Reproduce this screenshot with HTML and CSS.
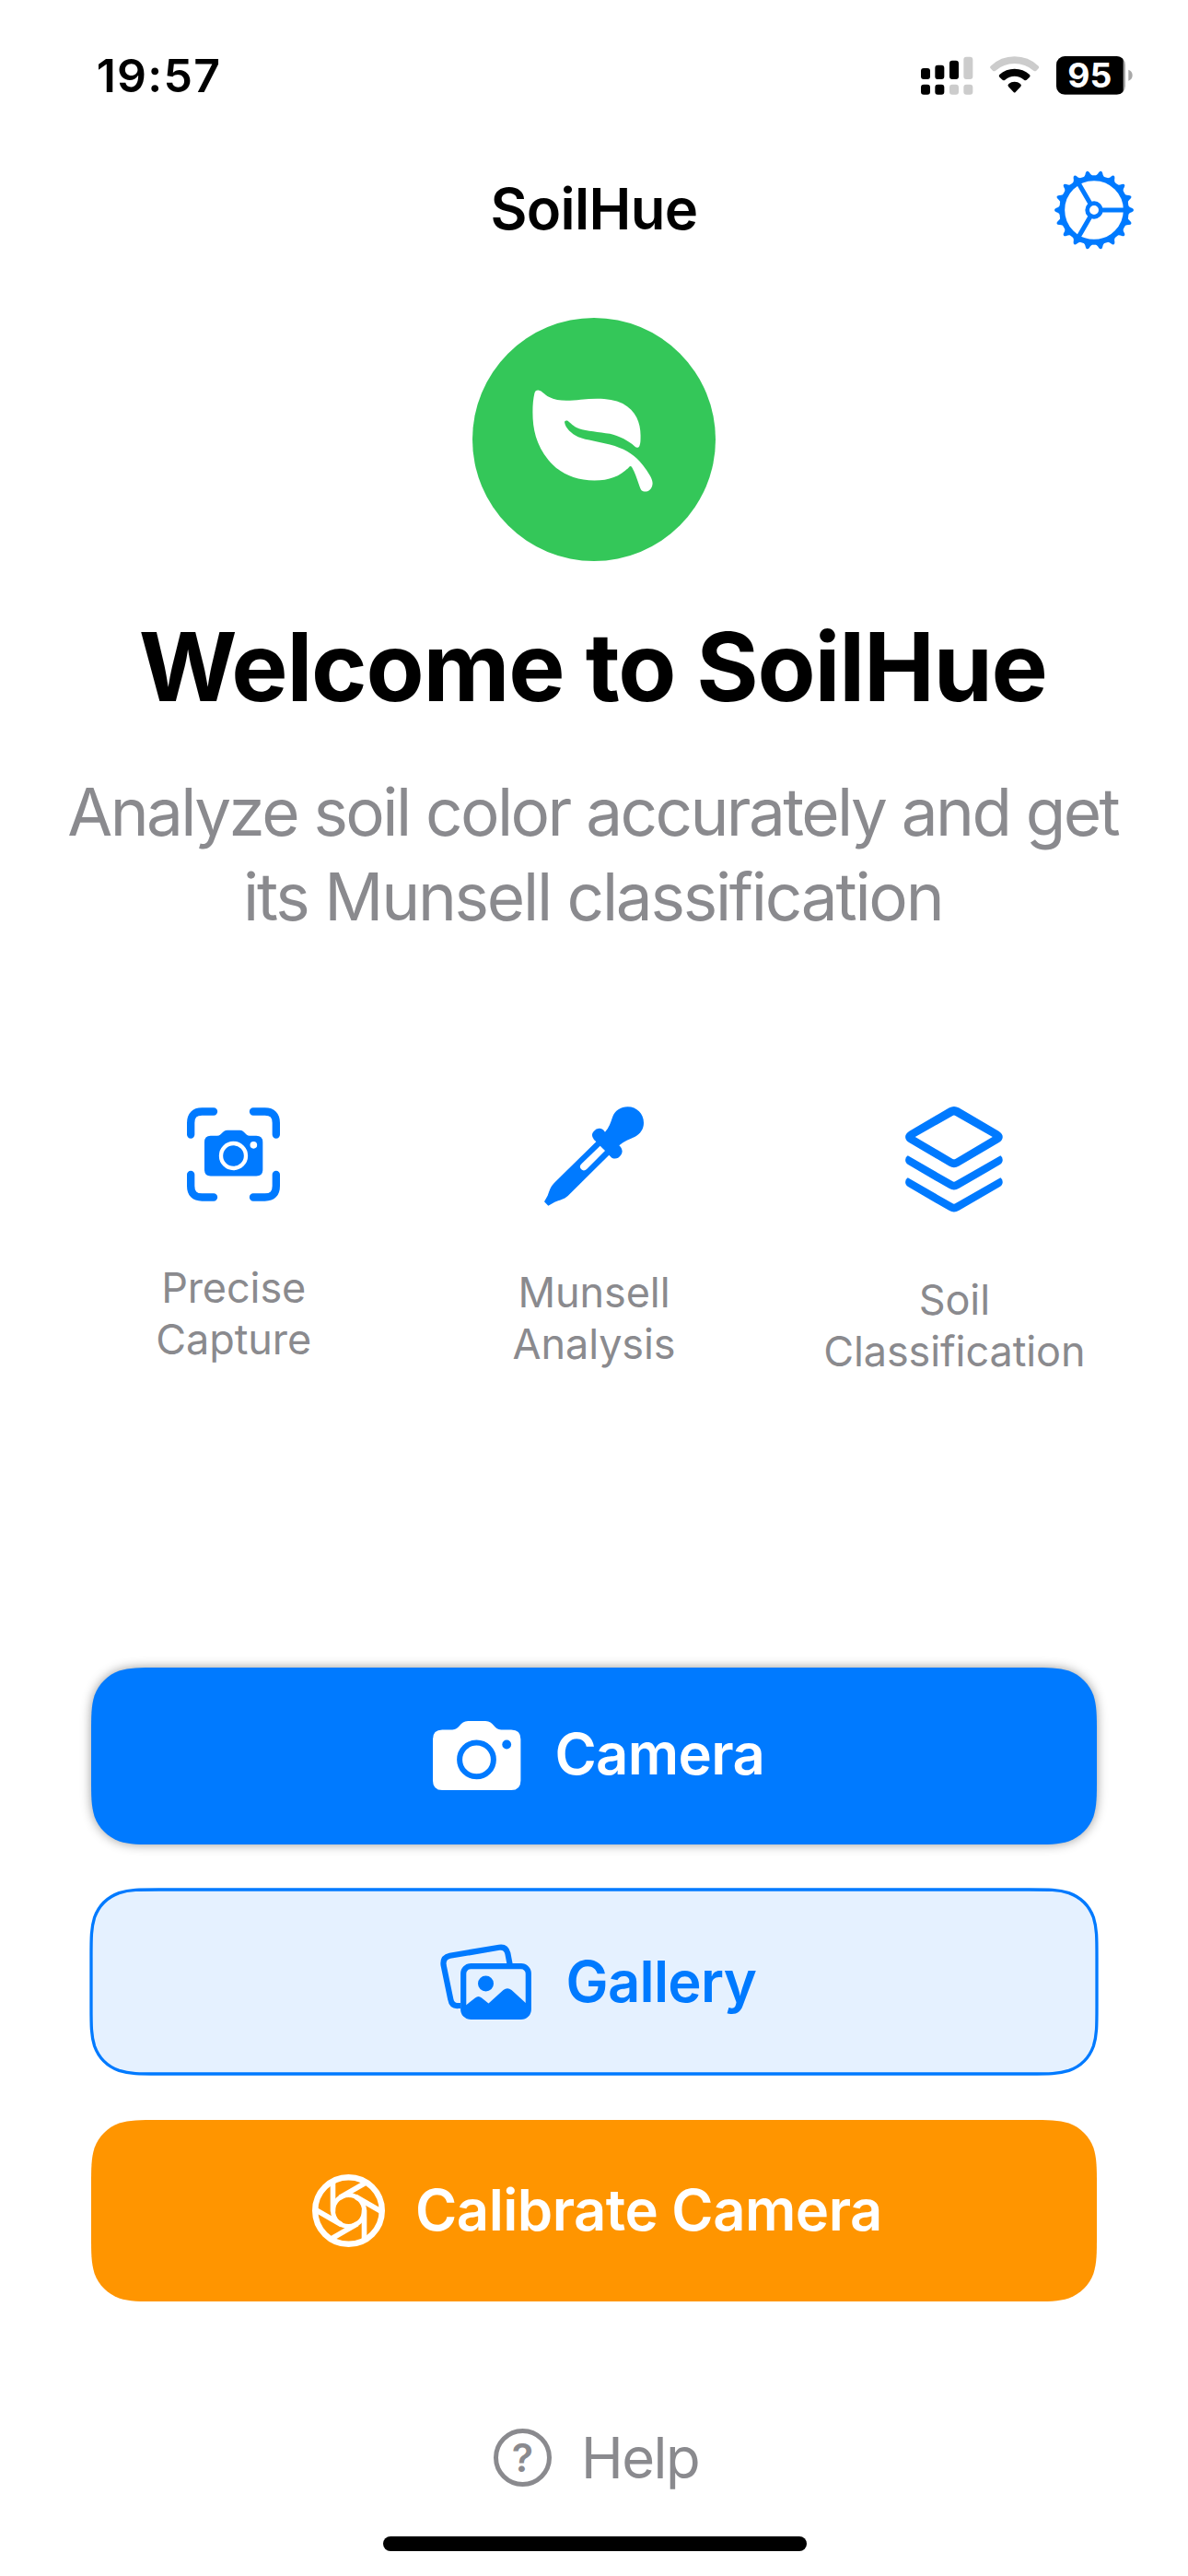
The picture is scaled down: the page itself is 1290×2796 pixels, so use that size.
FILE: index.html
```html
<!DOCTYPE html>
<html lang="en">
<head>
<meta charset="utf-8">
<title>SoilHue</title>
<link rel="stylesheet" href="styles.css">
</head>
<body>
<div class="status">
  <span class="time">19:57</span>
  <div class="indicators">
    <svg width="56.33" height="42" viewBox="120 93 169 126">
      <g fill="#000">
        <rect x="120" y="132" width="30" height="36" rx="9"/>
        <rect x="166" y="122" width="30" height="46" rx="9"/>
        <rect x="213" y="107" width="30" height="61" rx="9"/>
        <rect x="120" y="185" width="30" height="33" rx="9"/>
        <rect x="166" y="185" width="30" height="33" rx="9"/>
      </g>
      <g fill="#ccc">
        <rect x="259" y="95" width="30" height="73" rx="9"/>
        <rect x="213" y="185" width="30" height="33" rx="9"/>
        <rect x="259" y="185" width="30" height="33" rx="9"/>
      </g>
    </svg>
    <svg width="53.33" height="42" viewBox="344 93 160 126">
      <path fill="#ccc" d="M346 125Q379 94 424 94Q469 94 502 125Q506 129 502 133L495 140Q491 144 486 140Q459 117 424 117Q389 117 362 140Q357 144 353 140L346 133Q342 129 346 125Z"/>
      <path d="M375 153Q396 134 424 134Q452 134 473 153Q477 157 473 161L465 169Q460 174 455 170Q441 158 424 158Q407 158 393 170Q388 174 383 169L375 161Q371 157 375 153Z"/>
      <path d="M405 183Q413 176 424 176Q435 176 443 183Q448 187 444 192L427 210Q424 213 421 210L404 192Q400 187 405 183Z"/>
    </svg>
    <svg width="82.67" height="42" viewBox="560 93 248 126">
      <clipPath id="battery"><rect x="560" y="93" width="225" height="125" rx="28"/></clipPath>
      <g clip-path="url(#battery)">
        <rect x="560" y="93" width="225" height="125" fill="#a8a8a8"/>
        <rect x="530" y="93" width="248" height="125" rx="14"/>
      </g>
      <path fill="#a8a8a8" d="M795 137Q808 142 808 155Q808 168 795 173Z"/>
      <text class="charge" x="669" y="196" text-anchor="middle">95</text>
    </svg>
  </div>
</div>

<header class="nav">
  <h1 class="nav-title">SoilHue</h1>
  <svg class="gear" width="90" height="90" viewBox="-135 -135 270 270" fill="none" stroke="#007aff">
    <circle r="104.5" stroke-width="18"/>
    <circle r="22" stroke-width="14"/>
    <path stroke-width="15" d="M26 0H100M-13 -22.5L-50 -86.6M-13 22.5L-50 86.6"/>
    <g id="teeth6">
      <g id="teeth3">
        <path id="tooth" fill="#007aff" stroke="none" d="M108 -18C113 -12 117 -8 123 -6.500Q129 -4 129 0Q129 4 123 6.500C117 8 113 12 108 18Z"/>
        <use href="#tooth" transform="rotate(20)"/>
        <use href="#tooth" transform="rotate(40)"/>
      </g>
      <use href="#teeth3" transform="rotate(60)"/>
    </g>
    <use href="#teeth6" transform="rotate(120)"/>
    <use href="#teeth6" transform="rotate(240)"/>
  </svg>
</header>

<main>
  <div class="logo">
    <svg width="264" height="264" viewBox="68 43 791 791" fill="#fff">
      <path d="M270 288Q272 278 282 278C296 280 300 292 318 301C345 316 385 313 420 309C470 304 520 303 557 322C600 345 615 385 615 425C615 440 615 450 612 458C610 466 602 467 596 461C575 442 545 427 515 420C480 413 440 412 415 403C395 396 388 385 378 378C372 375 367 378 368 384C371 402 390 420 412 430C440 441 480 445 515 455C560 467 590 485 612 510C635 537 655 565 654 582C653 600 640 609 627 608C617 607 614 598 609 583C602 562 594 540 586 528Q582 523 577 529C550 557 515 572 465 572C400 571 350 548 315 505C275 455 264 405 264 350C264 325 266 305 270 288Z"/>
    </svg>
  </div>
  <h2 class="welcome">Welcome to SoilHue</h2>
  <p class="lead"><span class="lead-a">Analyze soil color accurately and get</span><br><span class="lead-b">its Munsell classification</span></p>

  <section class="features">
    <div class="feature capture">
      <svg width="101.33" height="102" viewBox="219 93.500 304 306">
        <path fill="none" stroke="#007aff" stroke-width="25" stroke-linecap="round" d="M306 107H268Q231.500 107 231.500 144V182M435 107H473Q509.500 107 509.500 144V182M306 386H268Q231.500 386 231.500 349V312M435 386H473Q509.500 386 509.500 349V312"/>
        <path fill="#007aff" d="M296 186H318C333 186 333 168 351 168H391C408 168 408 186 423 186H445Q466 186 466 207V296Q466 317 445 317H296Q276 317 276 296V207Q276 186 296 186Z"/>
        <circle cx="370.500" cy="251" r="40.500" fill="none" stroke="#fff" stroke-width="13"/>
        <circle cx="436" cy="216" r="11.500" fill="#fff"/>
      </svg>
      <p>Precise<br>Capture</p>
    </div>
    <div class="feature dropper">
      <svg width="108" height="107.670" viewBox="213 89 324 323">
        <path fill="#007aff" d="M411 172C424 158 430 140 435 124C443 102 462 90 485 90C514 90 537 113 537 142C537 162 526 178 509 187C492 195 472 202 457 216L462 221Q472 235 462 248Q450 264 433 256L424 247L290 380C277 392 262 394 247 400L226 412L213 399L224 379C229 365 233 350 246 337L382 204L375 197Q363 182 374 170Q388 154 405 165Z"/>
        <path fill="#fff" d="M395 217L411 233L352 292Q342 302 333 293Q325 285 335 275Z"/>
      </svg>
      <p>Munsell<br>Analysis</p>
    </div>
    <div class="feature layers">
      <svg width="106" height="115" viewBox="340 91 317.500 345" fill="#007aff">
        <path fill-rule="evenodd" d="M482 95.500Q498.500 86 515 95.500L644 171Q657 179 657 190Q657 201 644 209L515 284.500Q498.500 295 482 284.500L353 209Q340 201 340 190Q340 179 353 171ZM493 121.500L372 190L493 261Q498.500 264 504 261L624 190L504 121.500Q498.500 118 493 121.500Z"/>
        <path id="sheet" d="M348 251L493 334Q498.500 338 504 334L650 251Q657 256 657 265Q657 275 647 281L515 357.500Q498.500 368 482 357.500L350 281Q340 275 340 265Q340 256 348 251Z"/>
        <use href="#sheet" y="72"/>
      </svg>
      <p>Soil<br>Classification</p>
    </div>
  </section>

  <section class="actions">
    <button class="btn camera">
      <svg class="plate" width="1092" height="192" viewBox="0 0 1092 192">
        <path fill="#007aff" d="M73.400 0H1018.600C1039.800 0 1050.300 0 1061.700 3.600C1074.100 8.100 1083.900 17.900 1088.400 30.300C1092 41.700 1092 52.200 1092 73.400V118.600C1092 139.800 1092 150.300 1088.400 161.700C1083.900 174.100 1074.100 183.900 1061.700 188.400C1050.300 192 1039.800 192 1018.600 192H73.400C52.200 192 41.700 192 30.300 188.400C17.900 183.900 8.100 174.100 3.600 161.700C0 150.300 0 139.800 0 118.600V73.400C0 52.200 0 41.700 3.600 30.300C8.100 17.900 17.900 8.100 30.300 3.600C41.700 0 52.200 0 73.400 0Z"/>
      </svg>
      <span class="content">
        <svg width="95.400" height="75" viewBox="469.800 1868.800 95.400 75">
          <path fill="#fff" d="M480 1878.300H491C499 1878.300 499 1868.800 508 1868.800H527C536 1868.800 536 1878.300 544 1878.300H555Q565.200 1878.300 565.200 1888.500V1933.500Q565.200 1943.800 555 1943.800H480Q469.800 1943.800 469.800 1933.500V1888.500Q469.800 1878.300 480 1878.300Z"/>
          <circle cx="517.300" cy="1910.700" r="18.400" fill="none" stroke="#007aff" stroke-width="6"/>
          <circle cx="550" cy="1894.300" r="4.900" fill="#007aff"/>
        </svg>
        <span class="label">Camera</span>
      </span>
    </button>
    <button class="btn gallery">
      <svg class="plate" width="1092" height="200" viewBox="0 0 1092 200">
        <path fill="#e5f1ff" stroke="#007aff" stroke-width="3.300" d="M73.400 0H1018.600C1039.800 0 1050.300 0 1061.700 3.600C1074.100 8.100 1083.900 17.900 1088.400 30.300C1092 41.700 1092 52.200 1092 73.400V126.600C1092 147.800 1092 158.300 1088.400 169.700C1083.900 182.100 1074.100 191.900 1061.700 196.400C1050.300 200 1039.800 200 1018.600 200H73.400C52.200 200 41.700 200 30.300 196.400C17.900 191.900 8.100 182.100 3.600 169.700C0 158.300 0 147.800 0 126.600V73.400C0 52.200 0 41.700 3.600 30.300C8.100 17.900 17.900 8.100 30.300 3.600C41.700 0 52.200 0 73.400 0Z"/>
      </svg>
      <span class="content">
        <svg width="99" height="82" viewBox="478 2111 99 82" fill="none" stroke="#007aff" stroke-width="6.200">
          <path d="M500 2178H497.500Q490.500 2178.500 489.300 2171L481.600 2134Q480.500 2125.500 488.500 2123.800L542 2114.700Q549.500 2113.500 551.300 2121L553.600 2133"/>
          <rect x="503.200" y="2135.100" width="70.600" height="54.800" rx="8"/>
          <circle cx="527.500" cy="2154" r="8.500" fill="#007aff" stroke="none"/>
          <path fill="#007aff" stroke="none" d="M504 2179L516 2169.500Q519.500 2166.500 523 2169.500L530.500 2175.500L546.500 2161Q551 2157.500 555.500 2161L573 2177V2182Q573 2191 566 2191H511Q504 2191 504 2182Z"/>
        </svg>
        <span class="label">Gallery</span>
      </span>
    </button>
    <button class="btn calibrate">
      <svg class="plate" width="1092" height="197" viewBox="0 0 1092 197">
        <path fill="#ff9500" d="M73.400 0H1018.600C1039.800 0 1050.300 0 1061.700 3.600C1074.100 8.100 1083.900 17.900 1088.400 30.300C1092 41.700 1092 52.200 1092 73.400V123.600C1092 144.800 1092 155.300 1088.400 166.700C1083.900 179.100 1074.100 188.900 1061.700 193.400C1050.300 197 1039.800 197 1018.600 197H73.400C52.200 197 41.700 197 30.300 193.400C17.900 188.900 8.100 179.100 3.600 166.700C0 155.300 0 144.800 0 123.600V73.400C0 52.200 0 41.700 3.600 30.300C8.100 17.900 17.900 8.100 30.300 3.600C41.700 0 52.200 0 73.400 0Z"/>
      </svg>
      <span class="content">
        <svg width="79" height="79" viewBox="-39.500 -39.500 79 79" fill="none" stroke="#fff" stroke-width="5.600">
          <circle r="36.300" stroke-width="6.400"/>
          <circle r="17" stroke-width="5"/>
          <path id="blade" d="M-17 1V-32"/>
          <use href="#blade" transform="rotate(60)"/>
          <use href="#blade" transform="rotate(120)"/>
          <use href="#blade" transform="rotate(180)"/>
          <use href="#blade" transform="rotate(240)"/>
          <use href="#blade" transform="rotate(300)"/>
        </svg>
        <span class="label">Calibrate Camera</span>
      </span>
    </button>
  </section>

  <div class="help">
    <span class="mark">?</span>
    <span class="help-label">Help</span>
  </div>
</main>
<div class="home"></div>
</body>
</html>
```
FILE: styles.css
```css
* { box-sizing: border-box; margin: 0; padding: 0; }

body {
  width: 1290px;
  height: 2796px;
  overflow: hidden;
  background: #fff;
  color: #000;
  font-family: Inter, "Liberation Sans", sans-serif;
  display: flex;
  flex-direction: column;
  align-items: center;
}

svg { display: block; flex: none; overflow: visible; }

.status {
  width: 100%;
  height: 183px;
  padding: 52.3px 60.5px 0 104.7px;
  display: flex;
  justify-content: space-between;
  align-items: flex-start;
}

.time { font-size: 50px; line-height: 60px; font-weight: 600; letter-spacing: 1.25px; }

.indicators { display: flex; gap: 18.6px; padding-top: 8.7px; }

.charge { font-size: 112px; font-weight: 700; fill: #fff; }

.nav {
  width: 100%;
  height: 90px;
  padding: 0 57.4px;
  display: grid;
  grid-template-columns: 1fr auto 1fr;
  align-items: center;
}

.nav-title {
  grid-column: 2;
  padding-bottom: 3px;
  font-size: 61.5px;
  line-height: 80px;
  font-weight: 600;
  letter-spacing: -.63px;
}

.gear { justify-self: end; }

main {
  width: 100%;
  display: flex;
  flex-direction: column;
  align-items: center;
}

.logo {
  width: 264px;
  height: 264px;
  margin: 72px 1px 0 0;
  border-radius: 50%;
  background: #34c759;
}

.welcome {
  margin-top: 52.5px;
  padding-right: 2.5px;
  font-size: 103px;
  line-height: 124px;
  font-weight: 700;
  letter-spacing: -1.2px;
}

.lead {
  margin-top: 49px;
  padding-right: 2.5px;
  font-size: 71px;
  line-height: 92.6px;
  color: #8a8a8e;
  text-align: center;
  white-space: nowrap;
}

.lead-a { letter-spacing: -2.57px; }
.lead-b { letter-spacing: -2.25px; }

.features {
  width: 1174px;
  height: 609.9px;
  margin-top: 180.400px;
  display: grid;
  grid-template-columns: repeat(3, 1fr);
  align-items: start;
}

.feature {
  display: flex;
  flex-direction: column;
  align-items: center;
  gap: 66.3px;
  font-size: 45px;
  line-height: 56px;
  letter-spacing: -.1px;
  color: #8a8a8e;
  text-align: center;
}

.capture { padding-top: 2px; }
.dropper { padding-top: .5px; }
.layers { padding-top: 1.200px; }

.actions {
  width: 1092px;
  display: grid;
  row-gap: 49.5px;
}

.btn {
  display: grid;
  border: 0;
  background: none;
  font: 600 61.5px/80px Inter, "Liberation Sans", sans-serif;
  color: #fff;
}

.plate, .content { grid-area: 1 / 1; }

.content {
  z-index: 1;
  display: flex;
  align-items: center;
  justify-content: center;
  gap: 37.2px;
}

.camera .plate { filter: drop-shadow(0 0 6px rgba(0, 0, 0, .4)); }
.camera .content { padding-left: 10px; letter-spacing: -.64px; }
.camera .label { padding-bottom: 3.4px; }

.gallery { color: #007aff; }
.gallery .content { padding-left: 9.6px; letter-spacing: -.7px; }
.gallery .label { padding-bottom: 1px; }

.calibrate .content { padding-left: 6.4px; gap: 33.5px; letter-spacing: -.5px; }

.help {
  height: 72px;
  margin-top: 134px;
  padding-left: 5px;
  display: flex;
  align-items: center;
  gap: 32px;
  color: #8a8a8e;
}

.mark {
  width: 63px;
  height: 63px;
  border: 5.3px solid #8a8a8e;
  border-radius: 50%;
  font-size: 43px;
  line-height: 53px;
  font-weight: 600;
  text-align: center;
}

.help-label { font-size: 61.5px; line-height: 72px; letter-spacing: -1.5px; }

.home {
  width: 460px;
  height: 16px;
  margin: 49px 0 0 1.500px;
  border-radius: 8px;
  background: #000;
}
```
